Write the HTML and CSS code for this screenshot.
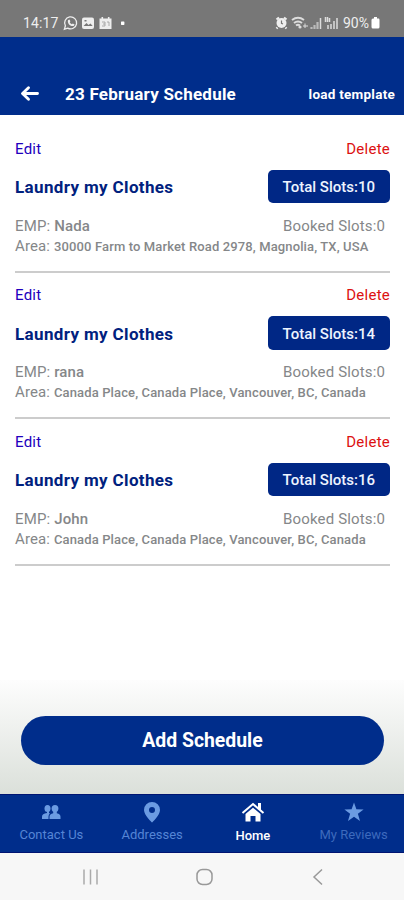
FILE: index.html
```
<!DOCTYPE html>
<html lang="en">
<head>
<meta charset="utf-8">
<title>23 February Schedule</title>
<link rel="stylesheet" href="styles.css">
</head>
<body>
<div class="status">
  <span class="time">14:17</span>
  <svg class="status-left" width="66" height="16" viewBox="0 0 66 16" fill="none">
    <path d="M1.400 14.200l1-3.400a6 6 0 1 1 2.300 2.300z" stroke="#eee" stroke-width="1.300"/>
    <path d="M5 5.200l1.400-.8 1 1.900-.7.9q.7 1.400 2.200 2.100l.9-.8 1.800 1-.6 1.300C7.500 12 4.100 8.500 5 5.200z" fill="#eee"/>
    <rect x="19" y="2.500" width="12" height="11.500" rx="2" fill="#eee"/>
    <path d="M20.500 11l3-3 2 2 2-1.500 2.200 2.500z" fill="#777"/><path d="M21.500 5h2v1.500h-2z" fill="#777"/>
    <path d="M36.500 3.500h2V2h1.600v1.500h4.800V2h1.600v1.500h2V14h-12z" fill="#eee"/>
    <path d="M39 7h3v2h-2m2 0v2h-3M44 7h2v4" stroke="#999" stroke-width=".8"/>
    <rect x="58" y="6.500" width="3.400" height="3.400" rx=".6" fill="#fff"/>
  </svg>
  <svg class="status-right" width="64" height="16" viewBox="0 0 64 16" fill="none">
    <circle cx="6.500" cy="8" r="5" fill="#eee"/>
    <path d="M1.500 4.500l2.500-2m7.500 2L9 2.500M2.500 12.500l-1 1m9-1l1 1" stroke="#eee" stroke-width="2.200"/>
    <path d="M6.500 5.500v2.800l1.500.7" stroke="#777" stroke-width="1.200"/>
    <path d="M17 5q6-4.500 12 0M19 8q4-3 8 0M21 10.500q2-1.500 4 0" stroke="#ddd" stroke-width="2"/>
    <circle cx="25" cy="12" r="1.600" fill="#ddd"/><path d="M30 8.500v4.500m-2-2h5" stroke="#ddd"/>
    <path d="M36.500 12v2m3-4v4m3-7v7" stroke="#bbb" stroke-width="2.200"/><path d="M45.500 3v11" stroke="#ddd" stroke-width="1.500"/>
    <path d="M50.500 2v5m2-5v5m2-4v4M53 10v4m3-5v5m3-8v8m3-11v11" stroke="#ddd" stroke-width="1.500"/>
  </svg>
  <span class="percent">90%</span>
  <svg class="battery" width="9" height="14" viewBox="0 0 9 14"><path d="M3 1h3v1.500h2Q8.500 3 8.500 4v7q0 1.500-1.500 1.500H2Q.5 12.500.5 11V4Q.5 2.500 2 2.500h1z" fill="#fff"/></svg>
</div>
<header class="header">
  <svg class="back" width="20" height="18" viewBox="0 0 20 18" fill="none" stroke="#fff" stroke-width="2.900" stroke-linecap="round" stroke-linejoin="round"><path d="M17.500 8.500H3M8.500 2.800L2.500 8.500l6 5.700"/></svg>
  <h1 class="title">23 February Schedule</h1>
  <span class="load">load template</span>
</header>
<main class="list">
  <article class="item">
    <div class="row actions"><span class="edit">Edit</span><span class="delete">Delete</span></div>
    <div class="row main"><h2 class="name">Laundry my Clothes</h2><span class="slots">Total Slots:10</span></div>
    <div class="row emp"><span>EMP: <b>Nada</b></span><span class="booked">Booked Slots:0</span></div>
    <div class="area">Area: <b>30000 Farm to Market Road 2978, Magnolia, TX, USA</b></div>
  </article>
  <article class="item">
    <div class="row actions"><span class="edit">Edit</span><span class="delete">Delete</span></div>
    <div class="row main"><h2 class="name">Laundry my Clothes</h2><span class="slots">Total Slots:14</span></div>
    <div class="row emp"><span>EMP: <b>rana</b></span><span class="booked">Booked Slots:0</span></div>
    <div class="area">Area: <b>Canada Place, Canada Place, Vancouver, BC, Canada</b></div>
  </article>
  <article class="item">
    <div class="row actions"><span class="edit">Edit</span><span class="delete">Delete</span></div>
    <div class="row main"><h2 class="name">Laundry my Clothes</h2><span class="slots">Total Slots:16</span></div>
    <div class="row emp"><span>EMP: <b>John</b></span><span class="booked">Booked Slots:0</span></div>
    <div class="area">Area: <b>Canada Place, Canada Place, Vancouver, BC, Canada</b></div>
  </article>
</main>
<div class="footer"><button class="add">Add Schedule</button></div>
<nav class="tabs">
  <div class="tab">
    <svg width="24" height="24" viewBox="0 0 24 24" fill="#6b9be2"><ellipse cx="8.500" cy="8.500" rx="3" ry="3.500"/><ellipse cx="16" cy="8.500" rx="3.400" ry="3.500"/><path d="M3 19v-2.200q0-3.300 5-3.800V11h2v2l1 .4q-1.500 1-1.500 3.200V19zM10.500 19v-2.200q0-3 3.700-3.600V11h3.600v2.200q3.700.6 3.700 3.600V19z"/></svg>
    <span>Contact Us</span>
  </div>
  <div class="tab">
    <svg width="24" height="24" viewBox="0 0 24 24"><path fill="#6b9be2" fill-rule="evenodd" d="M12 2a8 8 0 0 0-8 8c0 5.500 8 12.500 8 12.500S20 15.500 20 10a8 8 0 0 0-8-8zm0 5a3 3 0 1 1 0 6 3 3 0 0 1 0-6z"/></svg>
    <span>Addresses</span>
  </div>
  <div class="tab active">
    <svg width="24" height="24" viewBox="0 0 24 24"><path fill="#fff" d="M4.500 14L12 7.700l7.500 6.300v7.500h-5V16h-5v5.500h-5z"/><path fill="none" stroke="#fff" stroke-width="2" d="M1.500 13L12 4 22.500 13"/><path fill="#fff" d="M17 3h3v8l-3-2.500z"/></svg>
    <span>Home</span>
  </div>
  <div class="tab reviews">
    <svg width="24" height="24" viewBox="0 0 24 24"><path fill="#6b9be2" d="M12 2.500l2.400 6.800 7.200.1-5.700 4.400 2.100 7.200L12 16.800 6 21l2.100-7.200-5.700-4.400 7.200-.1z"/></svg>
    <span>My Reviews</span>
  </div>
</nav>
<div class="system">
  <svg width="18" height="18" viewBox="0 0 18 18" fill="none" stroke="#aaa" stroke-width="1.500"><path d="M2 1.500v15M8.500 1.500v15M15 1.500v15"/></svg>
  <svg width="18" height="18" viewBox="0 0 18 18" fill="none" stroke="#999" stroke-width="1.500"><rect x="1" y="1.500" width="15" height="15" rx="5.500"/></svg>
  <svg width="18" height="18" viewBox="0 0 18 18" fill="none" stroke="#999" stroke-width="1.500"><path d="M13 1.500L5 9l8 7.500"/></svg>
</div>
</body>
</html>
```
FILE: styles.css
```
* { box-sizing: border-box; }
body { margin: 0; width: 404px; height: 900px; overflow: hidden; display: flex; flex-direction: column; background: #fff; font-family: Roboto, "Liberation Sans", sans-serif; }
h1, h2 { margin: 0; }
span, h1, h2, b { white-space: nowrap; }
svg { display: block; flex: none; }
.status { flex: none; height: 37px; background: #777; color: #eee; display: flex; align-items: center; padding: 9px 24px 0 23px; font-size: 14px; }
.time { width: 40px; letter-spacing: .15px; }
.status-right { margin-left: auto; margin-right: 4px; }
.percent { width: 27px; letter-spacing: 0; }
.battery { margin-left: 1px; }
.header { flex: none; height: 78px; background: #002d8b; color: #fff; display: flex; align-items: center; padding: 35px 9px 0 20px; }
.title { margin-left: 25px; font-size: 17px; font-weight: 700; letter-spacing: .23px; }
.load { margin-left: auto; font-size: 13.500px; font-weight: 700; letter-spacing: .25px; }
.list { flex: 1; padding: 11px 14px 0 15px; min-height: 0; }
.item { height: 146.600px; border-bottom: 2px solid #ccc; padding-top: 11.500px; color: #858789; }
.row { display: flex; justify-content: space-between; align-items: center; }
.actions { height: 22px; font-size: 15px; letter-spacing: .25px; }
.edit { color: #2100bd; }
.delete { color: #dc1111; }
.main { height: 34px; margin-top: 10px; }
.name { color: #00217e; font-size: 17px; font-weight: 700; letter-spacing: .36px; padding-top: 1px; }
.slots { width: 122.500px; height: 33.500px; border-radius: 5px; background: #002785; color: #eef4ff; font-size: 15px; font-weight: 500; display: flex; align-items: center; justify-content: center; padding-top: 1px; }
.emp { height: 20px; margin-top: 12px; font-size: 15px; letter-spacing: .15px; padding-right: 5px; }
.area { height: 20px; line-height: 20px; font-size: 15px; letter-spacing: .13px; white-space: nowrap; }
b { font-weight: 500; }
.area b { font-size: 13px; }
.footer { flex: none; height: 114px; padding: 35.500px 20px 0 21px; background: linear-gradient(#fdfdfd, #dbe0da); }
.add { display: block; width: 100%; height: 49px; border: 0; border-radius: 25px; background: #002d8b; color: #fff; font: 700 19.400px Roboto, sans-serif; }
.tabs { flex: none; height: 59px; background: #002d8b; border-top: 1px solid #001572; border-bottom: 1px solid #001572; display: flex; color: #5585d5; padding-left: 1px; }
.tab { flex: 1; display: flex; flex-direction: column; align-items: center; padding-top: 5px; font-size: 13px; line-height: 17px; gap: 2px; }
.active { color: #fff; font-weight: 500; gap: 3px; }
.reviews { color: #3d6abd; }
.system { flex: none; height: 47px; background: #f7f7f7; display: flex; align-items: center; justify-content: space-between; padding: 1px 77px 0 82px; }
```
